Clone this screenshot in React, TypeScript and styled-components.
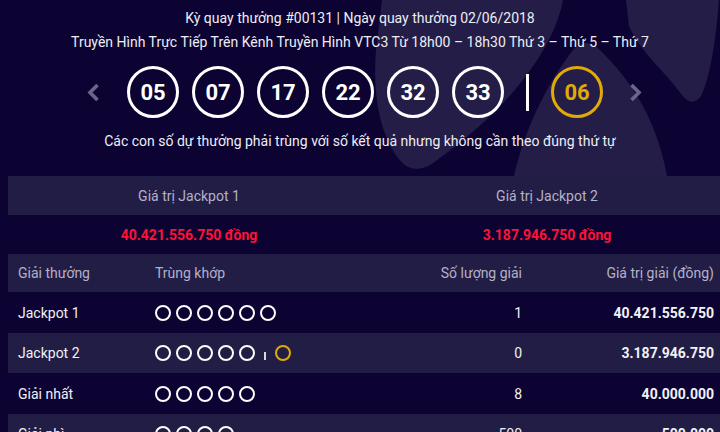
import React from "react";
import styled, { createGlobalStyle } from "styled-components";

const GlobalStyle = createGlobalStyle`
  html, body {
    margin: 0;
    padding: 0;
    background: #0c0333;
    overflow: hidden;
  }
  body {
    font-family: Roboto, "Noto Sans", "Liberation Sans", sans-serif;
    color: #ecebf2;
  }
`;

const Page = styled.div`
  position: relative;
  width: 720px;
  height: 432px;
  overflow: hidden;
  padding-top: 6px;
  box-sizing: border-box;
`;

const Decor = styled.svg`
  position: absolute;
  top: 0;
  left: 0;
  z-index: 0;
`;

const Hero = styled.section`
  position: relative;
  z-index: 1;
  display: flex;
  flex-direction: column;
  align-items: center;
`;

const InfoLine = styled.div`
  font-size: 14px;
  line-height: 24px;
  color: #eeedf4;
  text-align: center;
  white-space: nowrap;
`;

const BallRow = styled.div`
  display: flex;
  align-items: center;
  margin-top: 12px;
  padding-left: 9px;
`;

const Balls = styled.div`
  display: flex;
  gap: 13px;
`;

const Ball = styled.div<{ $gold?: boolean }>`
  width: 52px;
  height: 52px;
  box-sizing: border-box;
  border-radius: 50%;
  border: 3px solid ${(p) => (p.$gold ? "#e1aa08" : "#ffffff")};
  color: ${(p) => (p.$gold ? "#e1aa08" : "#ffffff")};
  display: flex;
  align-items: center;
  justify-content: center;
  font-size: 22px;
  font-weight: 700;
`;

const Separator = styled.div`
  width: 3px;
  height: 37px;
  background: #ffffff;
  margin: 0 22px;
`;

const NavButton = styled.button<{ $side: "left" | "right" }>`
  background: none;
  border: none;
  padding: 0;
  display: flex;
  align-items: center;
  ${(p) => (p.$side === "left" ? "margin-right: 27px;" : "margin-left: 26px;")}
`;

const Caption = styled.div`
  margin-top: 11px;
  font-size: 14px;
  line-height: 24px;
  color: #eeedf4;
  white-space: nowrap;
`;

const Table = styled.div`
  position: relative;
  z-index: 1;
  margin: 23px 0 0 8px;
  width: 716px;
`;

const JackpotGrid = styled.div<{ $light?: boolean; $h: number }>`
  display: grid;
  grid-template-columns: 1fr 1fr;
  height: ${(p) => p.$h}px;
  align-items: center;
  background: ${(p) => (p.$light ? "#221d45" : "transparent")};
`;

const JackpotLabel = styled.div`
  text-align: center;
  font-size: 14px;
  color: #b4b1c8;
  padding-left: 4px;
`;

const JackpotValue = styled.div`
  text-align: center;
  font-size: 14px;
  font-weight: 700;
  color: #ff1237;
  padding-left: 4px;
`;

const PrizeRow = styled.div<{ $light?: boolean; $h: number }>`
  display: grid;
  grid-template-columns: 137px 240px 1fr 192px;
  height: ${(p) => p.$h}px;
  align-items: center;
  background: ${(p) => (p.$light ? "#221d45" : "transparent")};
  padding: 0 10px;
  box-sizing: border-box;
  font-size: 14px;
`;

const Cell = styled.div<{ $right?: boolean; $bold?: boolean; $muted?: boolean }>`
  text-align: ${(p) => (p.$right ? "right" : "left")};
  font-weight: ${(p) => (p.$bold ? 700 : 400)};
  color: ${(p) => (p.$muted ? "#b4b1c8" : "#f2f1f6")};
  white-space: nowrap;
`;

const MatchCell = styled.div`
  display: flex;
  align-items: center;
  gap: 5px;
`;

const Dot = styled.span<{ $gold?: boolean }>`
  width: 16px;
  height: 16px;
  box-sizing: border-box;
  border-radius: 50%;
  border: 2.4px solid ${(p) => (p.$gold ? "#e1aa08" : "#ffffff")};
`;

const Tick = styled.span`
  width: 2px;
  height: 8px;
  background: #d8d6e4;
  margin: 6px 4px 0 4px;
  align-self: center;
`;

const Chevron = ({ dir }: { dir: "left" | "right" }) => (
  <svg width="13" height="19" viewBox="0 0 13 19">
    <path
      d={dir === "left" ? "M10.5 2 L3 9.5 L10.5 17" : "M2.5 2 L10 9.5 L2.5 17"}
      fill="none"
      stroke="#6b6689"
      strokeWidth="3.6"
    />
  </svg>
);

const prizes = [
  { name: "Jackpot 1", dots: 6, gold: false, count: "1", value: "40.421.556.750" },
  { name: "Jackpot 2", dots: 5, gold: true, count: "0", value: "3.187.946.750" },
  { name: "Giải nhất", dots: 5, gold: false, count: "8", value: "40.000.000" },
  { name: "Giải nhì", dots: 4, gold: false, count: "500", value: "500.000" },
];

const numbers = ["05", "07", "17", "22", "32", "33"];

export default function App() {
  return (
    <>
      <GlobalStyle />
      <Page>
        <Decor width="720" height="176" viewBox="0 0 720 176">
          <g fill="#231d48">
            <path d="M382 0 L563 0 C556 40 520 100 440 158 Q414 180 398 158 C382 136 372 100 376 50 Z" />
            <path d="M514 176 C524 130 548 82 573 50 Q586 36 600 50 C626 76 655 112 667 176 Z" />
            <path d="M626 0 L719 0 C716 40 710 78 701 96 Q692 108 682 95 C664 70 640 52 629 26 Z" />
          </g>
        </Decor>
        <Hero>
          <InfoLine>Kỳ quay thưởng #00131 | Ngày quay thưởng 02/06/2018</InfoLine>
          <InfoLine>
            Truyền Hình Trực Tiếp Trên Kênh Truyền Hình VTC3 Từ 18h00 – 18h30 Thứ 3 – Thứ 5 – Thứ 7
          </InfoLine>
          <BallRow>
            <NavButton $side="left" aria-label="prev">
              <Chevron dir="left" />
            </NavButton>
            <Balls>
              {numbers.map((n) => (
                <Ball key={n}>{n}</Ball>
              ))}
            </Balls>
            <Separator />
            <Ball $gold>06</Ball>
            <NavButton $side="right" aria-label="next">
              <Chevron dir="right" />
            </NavButton>
          </BallRow>
          <Caption>Các con số dự thưởng phải trùng với số kết quả nhưng không cần theo đúng thứ tự</Caption>
        </Hero>
        <Table>
          <JackpotGrid $light $h={39}>
            <JackpotLabel>Giá trị Jackpot 1</JackpotLabel>
            <JackpotLabel>Giá trị Jackpot 2</JackpotLabel>
          </JackpotGrid>
          <JackpotGrid $h={39}>
            <JackpotValue>40.421.556.750 đồng</JackpotValue>
            <JackpotValue>3.187.946.750 đồng</JackpotValue>
          </JackpotGrid>
          <PrizeRow $light $h={38}>
            <Cell $muted>Giải thưởng</Cell>
            <Cell $muted>Trùng khớp</Cell>
            <Cell $muted $right>Số lượng giải</Cell>
            <Cell $muted $right>Giá trị giải (đồng)</Cell>
          </PrizeRow>
          {prizes.map((p, i) => (
            <PrizeRow key={p.name} $light={i % 2 === 1} $h={i % 2 === 1 ? 40 : 41}>
              <Cell>{p.name}</Cell>
              <MatchCell>
                {Array.from({ length: p.dots }).map((_, k) => (
                  <Dot key={k} />
                ))}
                {p.gold && (
                  <>
                    <Tick />
                    <Dot $gold />
                  </>
                )}
              </MatchCell>
              <Cell $right>{p.count}</Cell>
              <Cell $right $bold>{p.value}</Cell>
            </PrizeRow>
          ))}
        </Table>
      </Page>
    </>
  );
}
